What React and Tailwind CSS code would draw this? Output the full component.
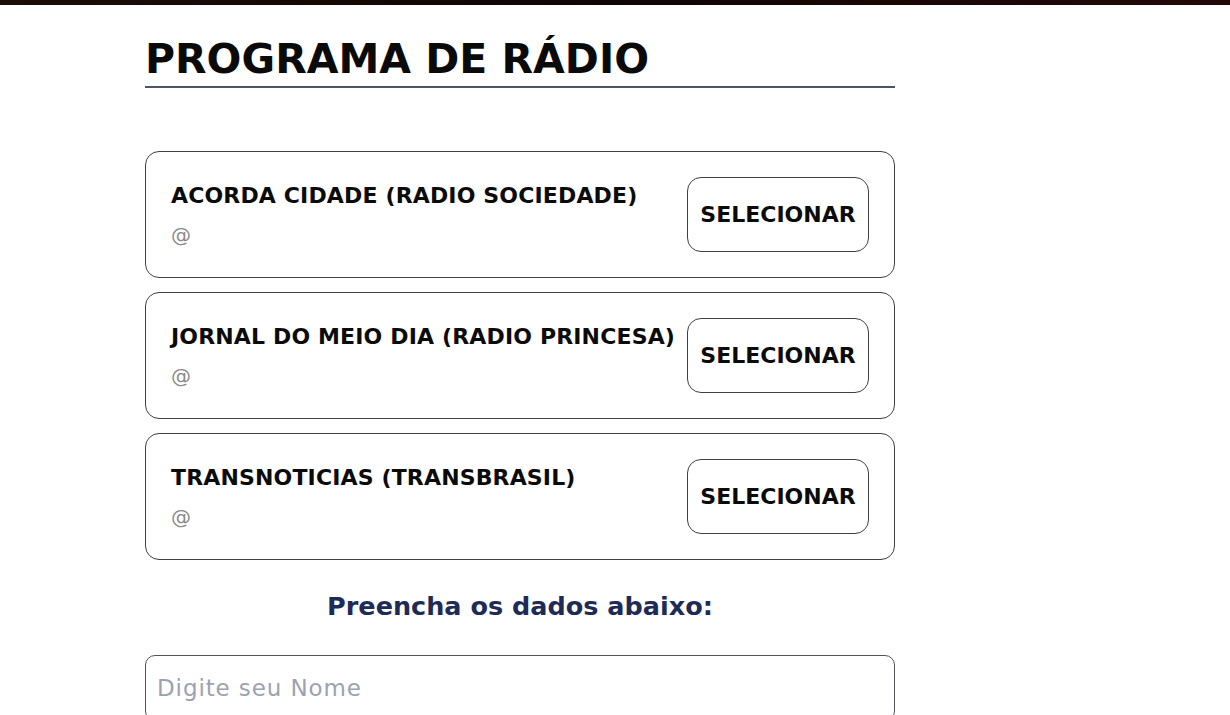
const programas = [
  { id: 1, nome: 'ACORDA CIDADE (RADIO SOCIEDADE)', arroba: '@' },
  { id: 2, nome: 'JORNAL DO MEIO DIA (RADIO PRINCESA)', arroba: '@' },
  { id: 3, nome: 'TRANSNOTICIAS (TRANSBRASIL)', arroba: '@' },
];

const ProgramaCard = ({ programa }) => {
  return (
    <div className="flex items-center justify-between h-[127px] border border-[#3f3f46] rounded-[14px] pl-[25px] pr-[25px]">
      <div className="self-start pt-[31px] flex flex-col">
        <span className="text-[22px] font-bold tracking-[0.15px] text-[#0b0b0b] leading-[26px]">{programa.nome}</span>
        <span className="text-[20px] text-[#8a8a8a] mt-[15px] leading-[22px]">{programa.arroba}</span>
      </div>
      <button
        type="button"
        className="w-[182px] h-[75px] border border-[#3f3f46] rounded-[14px] bg-white text-[22px] font-bold text-[#0b0b0b]"
      >
        SELECIONAR
      </button>
    </div>
  );
};

const App = () => {
  return (
    <div className="min-h-screen bg-white overflow-hidden font-['DejaVu_Sans',sans-serif]">
      <div className="h-[5px] bg-gradient-to-r from-[#1c0d06] via-[#0f0503] to-[#240808]" />
      <div className="pl-[145px] w-[895px]">
        <div className="pt-[30px] pb-[3px] border-b-2 border-[#4b5563]">
          <h1 className="text-[41px] font-bold leading-[48px] text-[#0a0a0a]">
            PROGRAMA DE RÁDIO
          </h1>
        </div>

        <div className="mt-[63px] flex flex-col gap-[14px]">
          {programas.map((p) => (
            <ProgramaCard key={p.id} programa={p} />
          ))}
        </div>

        <h2 className="mt-[31px] text-center text-[25.5px] font-bold text-[#1e2b57] leading-[30px]">
          Preencha os dados abaixo:
        </h2>

        <input
          type="text"
          placeholder="Digite seu Nome"
          className="mt-[34px] w-full h-[66px] border border-[#52525b] rounded-[10px] px-[11px] text-[23px] tracking-[0.9px] placeholder:text-[#9ca3af] outline-none"
        />
      </div>
    </div>
  );
};

export default App;
